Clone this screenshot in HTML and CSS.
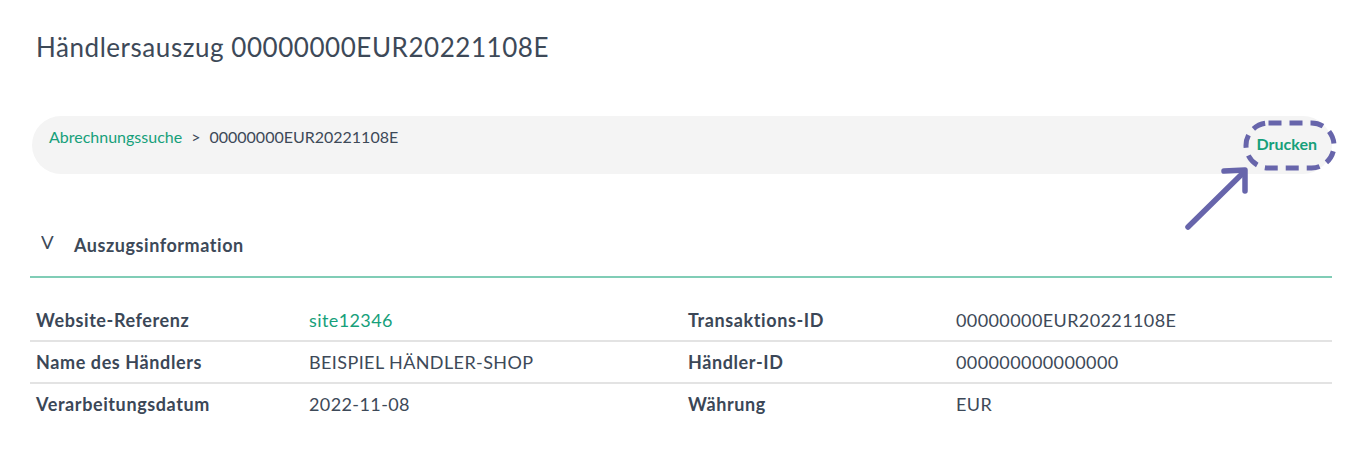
FILE: index.html
```html
<!DOCTYPE html>
<html lang="de">
<head>
<meta charset="utf-8">
<title>Händlersauszug</title>
<link rel="stylesheet" href="styles.css">
</head>
<body>
<main class="page">
  <h1 class="title">Händlersauszug 00000000EUR20221108E</h1>
  <div class="crumbbar">
    <nav class="crumbs">
      <a class="crumb-link" href="#">Abrechnungssuche</a>
      <span class="crumb-sep">&gt;</span>
      <span class="crumb-current">00000000EUR20221108E</span>
    </nav>
    <a class="print" href="#">Drucken</a>
    <svg class="callout" width="130" height="120" viewBox="0 0 130 120" aria-hidden="true">
      <rect x="41" y="6" width="88" height="45" rx="22.5" ry="22.5" fill="none" stroke="#6765ab" stroke-width="5" stroke-dasharray="13 8"/>
      <g fill="none" stroke="#6765ab" stroke-width="5.5" stroke-linecap="round" stroke-linejoin="round">
        <path d="M-17 110 L39 55"/>
        <path d="M19 54 L40 53 L40 74"/>
      </g>
    </svg>
  </div>
  <section class="section">
    <div class="section-head">
      <span class="chev">V</span>
      <h2 class="section-title">Auszugsinformation</h2>
    </div>
    <div class="info">
      <div class="row">
        <div class="label">Website-Referenz</div>
        <div class="value"><a class="link" href="#">site12346</a></div>
        <div class="label">Transaktions-ID</div>
        <div class="value">00000000EUR20221108E</div>
      </div>
      <div class="row">
        <div class="label">Name des Händlers</div>
        <div class="value">BEISPIEL HÄNDLER-SHOP</div>
        <div class="label">Händler-ID</div>
        <div class="value">000000000000000</div>
      </div>
      <div class="row">
        <div class="label">Verarbeitungsdatum</div>
        <div class="value">2022-11-08</div>
        <div class="label">Währung</div>
        <div class="value">EUR</div>
      </div>
    </div>
  </section>
</main>
</body>
</html>
```
FILE: styles.css
```css
html, body {
  margin: 0;
  padding: 0;
  background: #ffffff;
}
body {
  font-family: Lato, "Open Sans", "Liberation Sans", sans-serif;
  color: #3b4757;
}
.page {
  padding: 30px 34px 0 30px;
}
.title {
  margin: 0 0 0 6px;
  font-size: 26px;
  font-weight: 400;
  line-height: 34px;
  letter-spacing: 0.55px;
  color: #3d4958;
}
.crumbbar {
  position: relative;
  margin: 52px 0 0 2px;
  height: 58px;
  background: #f4f4f4;
  border-radius: 29px;
  display: flex;
  justify-content: space-between;
  align-items: flex-start;
  padding: 0 15px 0 17px;
}
.crumbs {
  display: flex;
  gap: 9px;
  font-size: 16px;
  line-height: 20px;
  padding-top: 11px;
}
.crumb-link {
  color: #16a07a;
  text-decoration: none;
}
.crumb-sep, .crumb-current {
  color: #3d4958;
}
.print {
  font-size: 16px;
  font-weight: 700;
  line-height: 20px;
  padding-top: 18px;
  color: #16a07a;
  text-decoration: none;
}
.callout {
  position: absolute;
  right: -3px;
  top: 1px;
  overflow: visible;
}
.section {
  margin-top: 56px;
}
.section-head {
  display: flex;
  align-items: center;
  height: 30px;
  padding-left: 11px;
  border-bottom: 2px solid #80cdb6;
  padding-bottom: 16px;
}
.chev {
  font-size: 17px;
  font-weight: 400;
  width: 33px;
  color: #3d4958;
  margin-top: -5px;
  transform: scaleX(1.1);
  transform-origin: left center;
}
.section-title {
  margin: 0;
  font-size: 18px;
  font-weight: 700;
  letter-spacing: 0.55px;
  color: #3d4958;
}
.info {
  margin-top: 22px;
}
.row {
  display: grid;
  grid-template-columns: 273px 379px 268px 1fr;
  height: 40px;
  align-items: center;
  padding-left: 6px;
  font-size: 18px;
}
.row + .row {
  border-top: 2px solid #e3e3e3;
}
.label {
  font-weight: 700;
  letter-spacing: 0.6px;
  color: #3b4757;
}
.value {
  letter-spacing: 0.4px;
  color: #3d4958;
}
.link {
  color: #16a07a;
  text-decoration: none;
}
```
